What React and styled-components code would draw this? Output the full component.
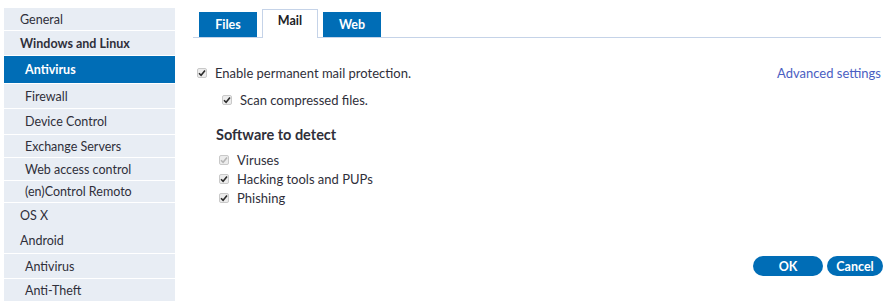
import React, { useState } from 'react'
import styled, { createGlobalStyle } from 'styled-components'

const GlobalStyle = createGlobalStyle`
  body {
    margin: 0;
    background: #ffffff;
    font-family: Lato, "Liberation Sans", sans-serif;
    color: #2f2f3a;
  }
`

// sidebar rows: label, level, height
const menu = [
  { label: 'General', h: 22, top: true },
  { label: 'Windows and Linux', h: 24, bold: true },
  { label: 'Antivirus', h: 27, sub: true, active: true },
  { label: 'Firewall', h: 24, sub: true },
  { label: 'Device Control', h: 25, sub: true },
  { label: 'Exchange Servers', h: 22, sub: true },
  { label: 'Web access control', h: 22, sub: true },
  { label: '(en)Control Remoto', h: 21, sub: true },
  { label: 'OS X', h: 25 },
  { label: 'Android', h: 25, noLine: true },
  { label: 'Antivirus', h: 24, sub: true },
  { label: 'Anti-Theft', h: 22, sub: true },
]

const tabs = ['Files', 'Mail', 'Web']

function Check({ disabled }) {
  return (
    <Box>
      <svg width="8" height="8" viewBox="0 0 8 8">
        <path d="M1 4.2 L3.1 6.3 L7 1.6" fill="none" stroke={disabled ? '#b5b5b5' : '#2a2a2a'} strokeWidth="1.6" />
      </svg>
    </Box>
  )
}

function App() {
  const [tab, setTab] = useState('Mail')
  return (
    <>
      <GlobalStyle />
      <Page>
        <Sidebar>
          {menu.map((m, i) => (
            <MenuItem key={i} h={m.h} sub={m.sub} bold={m.bold} active={m.active} line={i > 0 && !m.noLine}>
              {m.label}
            </MenuItem>
          ))}
        </Sidebar>
        <Main>
          <TabBar>
            {tabs.map((t) => (
              <Tab key={t} active={tab === t} onClick={() => setTab(t)}>{t}</Tab>
            ))}
          </TabBar>
          <Content>
            <TopRow>
              <Option>
                <Check />
                Enable permanent mail protection.
              </Option>
              <Link>Advanced settings</Link>
            </TopRow>
            <SubOption>
              <Check />
              Scan compressed files.
            </SubOption>
            <Heading>Software to detect</Heading>
            <List>
              <ListOption><Check disabled />Viruses</ListOption>
              <ListOption><Check />Hacking tools and PUPs</ListOption>
              <ListOption><Check />Phishing</ListOption>
            </List>
            <Buttons>
              <Button wide>OK</Button>
              <Button>Cancel</Button>
            </Buttons>
          </Content>
        </Main>
      </Page>
    </>
  )
}

//css
const Page = styled.div`
  display: flex;
  width: 890px;
  height: 308px;
  overflow: hidden;
`
const Sidebar = styled.div`
  margin: 8px 0 0 4px;
  width: 171px;
  background-color: #e8edf4;
  display: flex;
  flex-direction: column;
  align-self: flex-start;
`
const MenuItem = styled.div`
  height: ${p => p.h}px;
  display: flex;
  align-items: center;
  padding-left: ${p => p.sub ? '21px' : '16px'};
  border-top: ${p => p.line ? '1px solid #ffffff' : 'none'};
  font-size: 12.5px;
  font-weight: ${p => p.bold || p.active ? 700 : 400};
  background-color: ${p => p.active ? '#006db6' : 'transparent'};
  color: ${p => p.active ? '#ffffff' : '#2f2f3a'};
`
const Main = styled.div`
  margin-left: 18px;
  width: 688px;
  display: flex;
  flex-direction: column;
`
const TabBar = styled.div`
  display: flex;
  align-items: flex-end;
  gap: 5px;
  padding: 8px 0 0 6px;
  height: 29px;
  border-bottom: 1px solid #c5d3e8;
`
const Tab = styled.div`
  width: ${p => p.active ? '56px' : '58px'};
  height: ${p => p.active ? '29px' : '25px'};
  display: flex;
  align-items: center;
  justify-content: center;
  box-sizing: border-box;
  font-size: 12.5px;
  font-weight: 700;
  cursor: pointer;
  background-color: ${p => p.active ? '#ffffff' : '#006db6'};
  color: ${p => p.active ? '#1d1d26' : '#ffffff'};
  border: ${p => p.active ? '1px solid #c5d3e8' : 'none'};
  border-bottom: none;
  margin-bottom: ${p => p.active ? '-1px' : '0'};
  padding-bottom: ${p => p.active ? '7px' : '0'};
`
const Content = styled.div`
  padding: 28px 0 0 4px;
  display: flex;
  flex-direction: column;
`
const TopRow = styled.div`
  display: flex;
  justify-content: space-between;
  align-items: center;
  height: 14px;
`
const Option = styled.label`
  display: flex;
  align-items: center;
  gap: 8px;
  font-size: 13px;
`
const SubOption = styled(Option)`
  margin: 13px 0 0 25px;
  height: 14px;
`
const Link = styled.a`
  color: #4a5ec2;
  font-size: 13px;
  cursor: pointer;
`
const Heading = styled.div`
  margin: 19px 0 0 19px;
  font-size: 14.5px;
  font-weight: 700;
  color: #2f2f3a;
`
const List = styled.div`
  margin: 10px 0 0 22px;
  display: flex;
  flex-direction: column;
  gap: 5px;
`
const ListOption = styled(Option)`
  height: 14px;
`
const Box = styled.span`
  width: 10px;
  height: 10px;
  box-sizing: border-box;
  border: 1px solid #c9c9c9;
  border-radius: 2px;
  background: #ececec;
  display: flex;
  align-items: center;
  justify-content: center;
`
const Buttons = styled.div`
  display: flex;
  justify-content: flex-end;
  gap: 4px;
  margin-top: 51px;
  margin-right: -2px;
`
const Button = styled.button`
  width: ${p => p.wide ? '70px' : '56px'};
  height: 20px;
  border: none;
  border-radius: 10px;
  background-color: #006db6;
  color: #ffffff;
  font-family: Lato, "Liberation Sans", sans-serif;
  font-size: 12.5px;
  font-weight: 700;
  padding: 0;
  cursor: pointer;
`

export default App
